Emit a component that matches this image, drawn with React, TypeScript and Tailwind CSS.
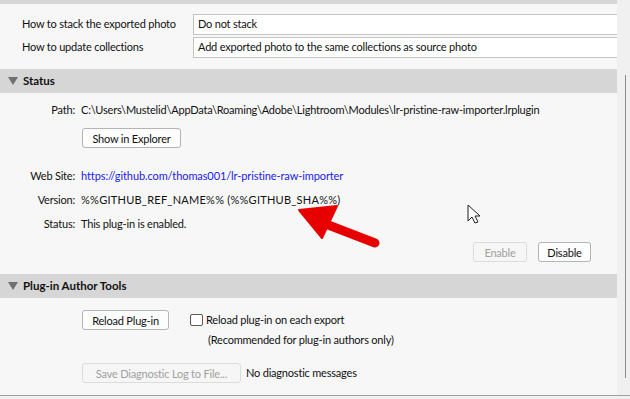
import React from "react";

const font = { fontFamily: 'Lato, "Noto Sans", sans-serif' };

function Btn({ children, disabled, className = "" }: { children: React.ReactNode; disabled?: boolean; className?: string }) {
  return (
    <div
      className={
        "h-[20px] flex items-center justify-center rounded-[3px] border leading-none whitespace-nowrap " +
        (disabled ? "border-[#dcdcdc] bg-[#f6f6f6] text-[#a0a0a0] " : "border-[#b4b4b4] bg-[#fdfdfd] text-[#111111] ") +
        className
      }
    >
      {children}
    </div>
  );
}

function Header({ title }: { title: string }) {
  return (
    <div className="h-[24px] bg-[#d6d6d6] flex items-center">
      <svg width="10" height="9" viewBox="0 0 10 9" className="ml-[8px] mr-[5px]">
        <polygon points="0,0 10,0 5,8" fill="#707070" />
      </svg>
      <span className="text-[11.5px] font-bold text-[#111111] tracking-[0px]">{title}</span>
    </div>
  );
}

function Field({ label, children, valueClass = "" }: { label: string; children: React.ReactNode; valueClass?: string }) {
  return (
    <div className="flex items-center h-[18px] whitespace-nowrap">
      <div className="w-[75px] text-right">{label}</div>
      <div className={"ml-[6px] " + valueClass}>{children}</div>
    </div>
  );
}

export default function App() {
  return (
    <div
      className="w-[630px] h-[399px] bg-[#f0f0f0] relative overflow-hidden text-[11px] tracking-[-0.2px] text-[#111111]"
      style={font}
    >
      <div className="flex h-[395px]">
        <div className="w-[617px] bg-[#f7f7f7] flex flex-col">
          <div className="h-[4px] bg-[#d6d6d6]" />
          <div className="pt-[10px] flex flex-col gap-[2px] whitespace-nowrap">
            <div className="flex items-center h-[21px]">
              <div className="w-[193px] pl-[22px]">How to stack the exported photo</div>
              <div className="flex-1 h-[21px] bg-white border-y border-l border-[#c4c4c4] flex items-center pl-[4px]">Do not stack</div>
            </div>
            <div className="flex items-center h-[21px]">
              <div className="w-[193px] pl-[22px]">How to update collections</div>
              <div className="flex-1 h-[21px] bg-white border-y border-l border-[#c4c4c4] flex items-center pl-[4px]">
                Add exported photo to the same collections as source photo
              </div>
            </div>
          </div>
          <div className="mt-[11px]">
            <Header title="Status" />
          </div>
          <div className="pt-[8px]">
            <Field label="Path:">C:\Users\Mustelid\AppData\Roaming\Adobe\Lightroom\Modules\lr-pristine-raw-importer.lrplugin</Field>
            <Btn className="ml-[82px] mt-[9px] w-[99px]">Show in Explorer</Btn>
            <div className="mt-[19px] flex flex-col gap-[6px]">
              <Field label="Web Site:" valueClass="text-[#2020f0] tracking-[-0.1px]">
                https://github.com/thomas001/lr-pristine-raw-importer
              </Field>
              <Field label="Version:" valueClass="tracking-[0.25px]">%%GITHUB_REF_NAME%% (%%GITHUB_SHA%%)</Field>
              <Field label="Status:">This plug-in is enabled.</Field>
            </div>
            <div className="flex justify-end gap-[11px] mt-[9px] pr-[26px]">
              <Btn disabled className="w-[54px]">Enable</Btn>
              <Btn className="w-[53px]">Disable</Btn>
            </div>
          </div>
          <div className="mt-[12px]">
            <Header title="Plug-in Author Tools" />
          </div>
          <div className="pt-[12px] whitespace-nowrap">
            <div className="flex items-center">
              <Btn className="ml-[82px] w-[87px]">Reload Plug-in</Btn>
              <div className="ml-[21px] w-[13px] h-[12px] rounded-[2px] border border-[#5a5a5a] bg-white" />
              <span className="ml-[3px]">Reload plug-in on each export</span>
            </div>
            <div className="ml-[208px] mt-[1px] h-[18px] flex items-center">(Recommended for plug-in authors only)</div>
            <div className="flex items-center mt-[14px]">
              <Btn disabled className="ml-[82px] w-[159px]">Save Diagnostic Log to File...</Btn>
              <span className="ml-[5px]">No diagnostic messages</span>
            </div>
          </div>
        </div>
        <div className="flex-1 relative">
          <div className="absolute left-[8px] top-[75px] w-px h-[303px] bg-[#8a8a8a]" />
        </div>
      </div>
      <div className="h-px bg-[#a0a0a0]" />

      <svg className="absolute left-0 top-0 pointer-events-none" width="630" height="399">
        <line x1="318" y1="221" x2="375" y2="243" stroke="#e60000" strokeWidth="9" strokeLinecap="round" />
        <polygon points="299,210 337,206 322,238" fill="#e60000" stroke="#e60000" strokeWidth="2" strokeLinejoin="round" />
        <path d="M468 205 L468 221 L472 217 L475 223 L478 222 L475 216 L480 216 Z" fill="white" stroke="#202020" strokeWidth="1" />
      </svg>
    </div>
  );
}
